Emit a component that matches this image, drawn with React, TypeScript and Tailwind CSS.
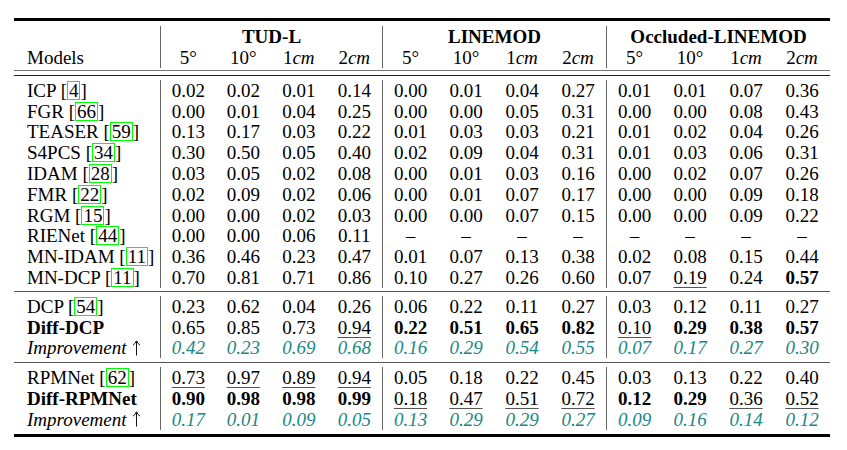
import type { ReactNode } from 'react';

type Row = {
  model: ReactNode;
  values: string[];
  kind?: 'improvement';
};

// "*0.22" = bold, "_0.94" = underlined
function Cite({ n }: { n: number }) {
  return (
    <>
      [<span className="inline-block border border-[#00ff00] leading-[17px] px-[1px]">{n}</span>]
    </>
  );
}

function UpArrow() {
  return (
    <svg width="9" height="16" viewBox="0 0 9 16" className="ml-[5px] inline-block">
      <path d="M4.5 15.5V1.5M1 5.2C2.6 4 3.8 2.6 4.5 0.8C5.2 2.6 6.4 4 8 5.2" fill="none" stroke="#111" strokeWidth="1" />
    </svg>
  );
}

const groups = ['TUD-L', 'LINEMOD', 'Occluded-LINEMOD'];

const section1: Row[] = [
  { model: <>ICP <Cite n={4} /></>, values: ['0.02', '0.02', '0.01', '0.14', '0.00', '0.01', '0.04', '0.27', '0.01', '0.01', '0.07', '0.36'] },
  { model: <>FGR <Cite n={66} /></>, values: ['0.00', '0.01', '0.04', '0.25', '0.00', '0.00', '0.05', '0.31', '0.00', '0.00', '0.08', '0.43'] },
  { model: <>TEASER <Cite n={59} /></>, values: ['0.13', '0.17', '0.03', '0.22', '0.01', '0.03', '0.03', '0.21', '0.01', '0.02', '0.04', '0.26'] },
  { model: <>S4PCS <Cite n={34} /></>, values: ['0.30', '0.50', '0.05', '0.40', '0.02', '0.09', '0.04', '0.31', '0.01', '0.03', '0.06', '0.31'] },
  { model: <>IDAM <Cite n={28} /></>, values: ['0.03', '0.05', '0.02', '0.08', '0.00', '0.01', '0.03', '0.16', '0.00', '0.02', '0.07', '0.26'] },
  { model: <>FMR <Cite n={22} /></>, values: ['0.02', '0.09', '0.02', '0.06', '0.00', '0.01', '0.07', '0.17', '0.00', '0.00', '0.09', '0.18'] },
  { model: <>RGM <Cite n={15} /></>, values: ['0.00', '0.00', '0.02', '0.03', '0.00', '0.00', '0.07', '0.15', '0.00', '0.00', '0.09', '0.22'] },
  { model: <>RIENet <Cite n={44} /></>, values: ['0.00', '0.00', '0.06', '0.11', '–', '–', '–', '–', '–', '–', '–', '–'] },
  { model: <>MN-IDAM <Cite n={11} /></>, values: ['0.36', '0.46', '0.23', '0.47', '0.01', '0.07', '0.13', '0.38', '0.02', '0.08', '0.15', '0.44'] },
  { model: <>MN-DCP <Cite n={11} /></>, values: ['0.70', '0.81', '0.71', '0.86', '0.10', '0.27', '0.26', '0.60', '0.07', '_0.19', '0.24', '*0.57'] },
];

const improvementLabel = (
  <>
    <span className="italic">Improvement</span>
    <UpArrow />
  </>
);

const section2: Row[] = [
  { model: <>DCP <Cite n={54} /></>, values: ['0.23', '0.62', '0.04', '0.26', '0.06', '0.22', '0.11', '0.27', '0.03', '0.12', '0.11', '0.27'] },
  { model: <span className="font-bold">Diff-DCP</span>, values: ['0.65', '0.85', '0.73', '_0.94', '*0.22', '*0.51', '*0.65', '*0.82', '_0.10', '*0.29', '*0.38', '*0.57'] },
  { model: improvementLabel, kind: 'improvement', values: ['0.42', '0.23', '0.69', '0.68', '0.16', '0.29', '0.54', '0.55', '0.07', '0.17', '0.27', '0.30'] },
];

const section3: Row[] = [
  { model: <>RPMNet <Cite n={62} /></>, values: ['_0.73', '_0.97', '_0.89', '_0.94', '0.05', '0.18', '0.22', '0.45', '0.03', '0.13', '0.22', '0.40'] },
  { model: <span className="font-bold">Diff-RPMNet</span>, values: ['*0.90', '*0.98', '*0.98', '*0.99', '_0.18', '_0.47', '_0.51', '_0.72', '*0.12', '*0.29', '_0.36', '_0.52'] },
  { model: improvementLabel, kind: 'improvement', values: ['0.17', '0.01', '0.09', '0.05', '0.13', '0.29', '0.29', '0.27', '0.09', '0.16', '0.14', '0.12'] },
];

const cols = 'grid grid-cols-[146px_repeat(4,55.5px)_repeat(8,56px)]';

function Value({ raw, improvement }: { raw: string; improvement: boolean }) {
  if (improvement) return <span className="italic text-[#178787]">{raw}</span>;
  if (raw.startsWith('*')) return <span className="font-bold">{raw.slice(1)}</span>;
  if (raw.startsWith('_'))
    return (
      <span className="underline decoration-[#555] decoration-1 underline-offset-[3px]">{raw.slice(1)}</span>
    );
  return <span>{raw}</span>;
}

function Section({ rows }: { rows: Row[] }) {
  return (
    <div className={cols}>
      {rows.map((r, ri) => (
        <div key={ri} className="contents">
          <div className="flex h-[20.8px] items-center whitespace-nowrap pl-[13px]">{r.model}</div>
          {r.values.map((v, i) => (
            <div
              key={i}
              className={`flex h-[20.8px] items-center justify-center ${i % 4 === 0 ? 'border-l border-[#666]' : ''}`}
            >
              <Value raw={v} improvement={r.kind === 'improvement'} />
            </div>
          ))}
        </div>
      ))}
    </div>
  );
}

function Units() {
  const labels: ReactNode[] = [
    <>5°</>,
    <>10°</>,
    <>1<span className="italic">cm</span></>,
    <>2<span className="italic">cm</span></>,
  ];
  return (
    <>
      {[0, 1, 2].flatMap((g) =>
        labels.map((l, i) => (
          <div
            key={`${g}-${i}`}
            className={`flex h-[21px] items-center justify-center ${i === 0 ? 'border-l border-[#666]' : ''}`}
          >
            {l}
          </div>
        )),
      )}
    </>
  );
}

export default function App() {
  return (
    <div className="h-[450px] w-[847px] bg-white pt-[18px] pl-[14px] text-[19px] leading-none text-black [font-family:'Liberation_Serif',serif]">
      <div className="w-[816px]">
        <div className="h-[3px] bg-black" />
        <div className={`${cols} mt-[5px]`}>
          <div className="h-[21px]" />
          {groups.map((g) => (
            <div key={g} className="col-span-4 flex h-[21px] items-center justify-center border-l border-[#666] font-bold">
              {g}
            </div>
          ))}
          <div className="flex h-[21px] items-center pl-[13px]">Models</div>
          <Units />
        </div>
        <div className="mt-[2px] h-px bg-[#777]" />
        <div className="mt-[4px] h-px bg-[#222]" />
        <div className="mt-[4px]">
          <Section rows={section1} />
        </div>
        <div className="mt-[3px] h-px bg-[#555]" />
        <div className="mt-[4px]">
          <Section rows={section2} />
        </div>
        <div className="mt-[4px] h-px bg-[#555]" />
        <div className="mt-[4px]">
          <Section rows={section3} />
        </div>
        <div className="mt-[4px] h-[3px] bg-black" />
      </div>
    </div>
  );
}
